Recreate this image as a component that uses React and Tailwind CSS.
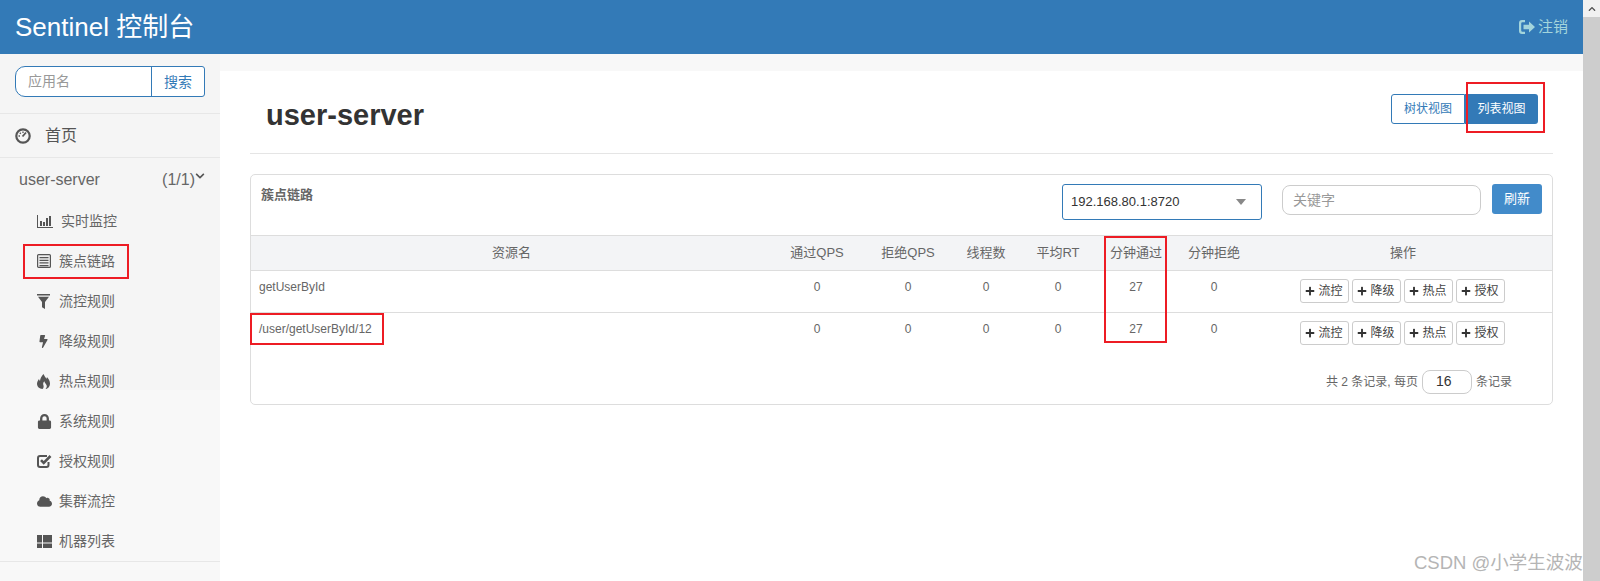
import React from "react";
import { FaBolt, FaLock, FaCloud, FaPlus, FaChevronDown, FaChevronUp } from "react-icons/fa";

const font = { fontFamily: '"Liberation Sans","Noto Sans CJK SC",sans-serif' };

const Dashboard = () => (
  <svg width="16" height="16" viewBox="0 0 16 16" fill="none" stroke="#555" className="shrink-0">
    <circle cx="8" cy="8" r="6.7" strokeWidth="2.2" />
    <path d="M7.500 8.500l3.500-4" strokeWidth="1.800" />
    <path d="M3.500 8h1.500M8 3.500v1.500M4.800 4.800l1 1" strokeWidth="1.300" />
  </svg>
);
const Stats = () => (
  <svg width="16" height="14" viewBox="0 0 16 14" fill="#555" className="shrink-0">
    <path d="M0 1h1v12h15v1H0z" />
    <path d="M3 7h2v5H3zM6 8h2v4H6zM9 4h2v8H9zM12 2h2v10h-2z" />
  </svg>
);
const ListAlt = () => (
  <svg width="14" height="14" viewBox="0 0 14 14" className="shrink-0">
    <rect x="0.600" y="0.600" width="12.800" height="12.800" rx="1" fill="#eee" stroke="#555" strokeWidth="1.200" />
    <path d="M2.500 3h9v1.300h-9zM2.500 5.700h9V7h-9zM2.500 8.300h9v1.300h-9zM2.500 11h9v1.200h-9z" fill="#555" />
  </svg>
);
const Funnel = () => (
  <svg width="13" height="15" viewBox="0 0 13 15" fill="#555" className="shrink-0">
    <path d="M0 0h13v1.600H0zM1 2.800h11L8 8v7l-3-1.800V8z" />
  </svg>
);
const Fire = () => (
  <svg width="13" height="15" viewBox="0 0 13 15" fill="#555" className="shrink-0">
    <path d="M6.500 0c1 2.500 2 3.200 3 4.800.3-.6.400-1.200.4-1.800 1.800 2 3.100 4 3.100 6.500C13 12.500 10.800 15 8.500 15c1-1 1.500-2.200 1.200-3.500-.4-1.500-2-2.300-2.400-4.300C6 8.500 6 10 6.500 11.500c.3 1.200.2 2.500-1 3.500C2.500 14.800 0 12.800 0 9.800 0 7.800 1 6.500 2 5c.1.800.4 1.500 1 2C3 4.500 4.800 2 6.500 0z" />
  </svg>
);
const CheckBox = () => (
  <svg width="15" height="14" viewBox="0 0 15 14" fill="none" stroke="#555" className="shrink-0">
    <path d="M11.500 8v3a2 2 0 0 1-2 2H3a2 2 0 0 1-2-2V4a2 2 0 0 1 2-2h7" strokeWidth="2" />
    <path d="M4 6.200l2.700 2.700L13.500 2" strokeWidth="2.600" />
  </svg>
);
const ThLarge = () => (
  <svg width="15" height="13" viewBox="0 0 15 13" fill="#555" className="shrink-0">
    <path d="M0 0h5v7.500H0zM6 0h9v7.500H6zM0 8.500h5V13H0zM6 8.500h9V13H6z" />
  </svg>
);
const LogOut = () => (
  <svg width="16" height="14" viewBox="0 0 16 14" fill="#a3d5dc" className="shrink-0">
    <path d="M6 0H3a3 3 0 0 0-3 3v8a3 3 0 0 0 3 3h3v-2.200H3.400A1.200 1.200 0 0 1 2.200 10.600V3.400A1.200 1.200 0 0 1 3.400 2.200H6z" />
    <path d="M10 1.500L16 7l-6 5.500V9.200H4.500V4.800H10z" />
  </svg>
);

const items = [
  { t: "实时监控", i: <Stats />, w: "w-[24px]" },
  { t: "簇点链路", i: <ListAlt />, w: "w-[22px]" },
  { t: "流控规则", i: <Funnel />, w: "w-[22px]" },
  { t: "降级规则", i: <FaBolt size={13} color="#555" />, w: "w-[22px]" },
  { t: "热点规则", i: <Fire />, w: "w-[22px]" },
];
const items2 = [
  { t: "系统规则", i: <FaLock size={15} color="#555" /> },
  { t: "授权规则", i: <CheckBox /> },
  { t: "集群流控", i: <FaCloud size={15} color="#555" /> },
  { t: "机器列表", i: <ThLarge /> },
];

function SideItem({ t, i, w = "w-[22px]" }) {
  return (
    <div className="flex h-10 items-center pl-[37px] text-[14px] text-[#666]">
      <span className={`${w} flex shrink-0 items-center`}>{i}</span>
      <span>{t}</span>
    </div>
  );
}

const rows = ["getUserById", "/user/getUserById/12"];
const heads = ["通过QPS", "拒绝QPS", "线程数", "平均RT", "分钟通过", "分钟拒绝"];
const ops = ["流控", "降级", "热点", "授权"];

function Row({ name, last }) {
  const vals = ["0", "0", "0", "0", "27", "0"];
  return (
    <tr className={last ? "h-[42px]" : "h-[42px] border-b border-[#ddd]"}>
      <td className="pl-[8px] pt-[6px] align-top leading-5">{name}</td>
      {vals.map((v, k) => (
        <td key={k} className="pt-[6px] text-center align-top leading-5">{v}</td>
      ))}
      <td className="pt-[8px] align-top">
        <div className="flex justify-center gap-[3px] pr-[2px]">
          {ops.map((o) => (
            <span key={o} className="flex h-6 w-[49px] items-center justify-center gap-[3px] rounded-[3px] border border-[#ccc] text-[12px] text-[#444]">
              <FaPlus size={10} color="#333" />
              {o}
            </span>
          ))}
        </div>
      </td>
    </tr>
  );
}

function RedBox({ className }) {
  return <div className={`pointer-events-none absolute border-[2px] border-[#ed1c24] ${className}`} />;
}

export default function App() {
  return (
    <div className="relative flex h-[581px] w-[1600px] overflow-hidden bg-white" style={font}>
      <div className="flex w-[1583px] flex-col">
        <header className="flex h-[54px] shrink-0 items-center justify-between bg-[#337ab7] pl-[15px] pr-[15px]">
          <span className="text-[26px] text-white">Sentinel 控制台</span>
          <span className="flex items-center gap-[3px] text-[15px] text-[#a3d5dc]">
            <LogOut />
            注销
          </span>
        </header>
        <div className="flex flex-1">
          <aside className="flex w-[220px] shrink-0 flex-col bg-[#f8f8f8]">
            <div className="h-[336px] bg-[#f5f5f5]">
              <div className="px-[15px] pb-4 pt-3">
                <div className="flex h-[31px] w-[190px] rounded-l-[10px] rounded-r-[3px] border border-[#337ab7] bg-white">
                  <span className="flex-1 pl-3 text-[14px] leading-[29px] text-[#999]">应用名</span>
                  <span className="flex w-[53px] items-center justify-center border-l border-[#337ab7] pt-[1px] text-[14px] text-[#337ab7]">搜索</span>
                </div>
              </div>
              <div className="flex h-[45px] items-center gap-[14px] border-y border-[#e7e7e7] pl-[15px] text-[16px] text-[#555]">
                <Dashboard />
                首页
              </div>
              <div className="flex h-[43px] items-center pl-[19px] pr-[15px] text-[16px] text-[#666]">
                <span className="flex-1">user-server</span>
                <span>(1/1)</span>
                <FaChevronDown size={10} color="#555" className="mb-[7px]" />
              </div>
              {items.map((x) => (
                <SideItem key={x.t} {...x} />
              ))}
            </div>
            <div className="flex-1 pt-[11px]">
              {items2.map((x) => (
                <SideItem key={x.t} {...x} />
              ))}
              <div className="border-t border-[#e7e7e7]" />
            </div>
          </aside>
          <main className="flex flex-1 flex-col bg-[#f8f8f8] pt-[17px]">
            <div className="flex-1 bg-white px-[30px]">
              <div className="flex h-[83px] items-start justify-between border-b border-[#e5e5e5] pl-[16px] pr-[15px]">
                <h1 className="mt-[25px] text-[29px] font-bold leading-[38px] text-[#333]">user-server</h1>
                <div className="mt-[23px] flex h-[30px] text-[12px]">
                  <span className="flex w-[74px] items-center justify-center rounded-l-[3px] border border-[#337ab7] text-[#337ab7]">树状视图</span>
                  <span className="flex w-[73px] items-center justify-center rounded-r-[3px] bg-[#337ab7] text-white">列表视图</span>
                </div>
              </div>
              <section className="mt-5 h-[231px] rounded-[5px] border border-[#ddd] text-[12px] text-[#666]">
                <div className="flex h-[60px] items-start pl-[10px] pr-[10px] pt-[9px]">
                  <span className="mt-[1px] flex-1 text-[13px] font-bold leading-5 text-[#666]">簇点链路</span>
                  <div className="flex h-9 w-[200px] items-center justify-between rounded-[3px] border border-[#337ab7] pl-2 pr-[15px] text-[13px] text-[#333]">
                    192.168.80.1:8720
                    <span className="h-0 w-0 border-x-[5px] border-t-[6px] border-x-transparent border-t-[#888]" />
                  </div>
                  <div className="ml-5 mt-[1px] flex h-[30px] w-[199px] items-center rounded-[8px] border border-[#ccc] pl-[10px] text-[14px] text-[#999]">关键字</div>
                  <span className="ml-[11px] flex h-[30px] w-[50px] items-center justify-center rounded-[3px] bg-[#428bca] text-[13px] text-white">刷新</span>
                </div>
                <table className="w-full table-fixed border-collapse">
                  <colgroup>
                    <col className="w-[521px]" />
                    <col className="w-[90px]" />
                    <col className="w-[92px]" />
                    <col className="w-[64px]" />
                    <col className="w-[80px]" />
                    <col className="w-[76px]" />
                    <col className="w-[80px]" />
                    <col className="w-[298px]" />
                  </colgroup>
                  <thead>
                    <tr className="h-[35px] border-y border-[#ddd] bg-[#f3f4f6] text-[13px]">
                      <th className="font-normal">资源名</th>
                      {heads.map((h) => (
                        <th key={h} className="font-normal">{h}</th>
                      ))}
                      <th className="font-normal">操作</th>
                    </tr>
                  </thead>
                  <tbody>
                    {rows.map((r, k) => (
                      <Row key={r} name={r} last={k === 1} />
                    ))}
                  </tbody>
                </table>
                <div className="flex items-center justify-end pr-10 pt-[15px]">
                  <span>共 2 条记录, 每页</span>
                  <span className="mx-1 flex h-6 w-[50px] items-center rounded-[8px] border border-[#ccc] pl-[13px] text-[14px] text-[#333]">16</span>
                  <span>条记录</span>
                </div>
              </section>
            </div>
          </main>
        </div>
      </div>
      <div className="flex w-[17px] flex-col bg-[#cdcdcd]">
        <div className="flex h-[17px] items-center justify-center bg-[#f1f1f1]">
          <FaChevronUp size={8} color="#505050" />
        </div>
      </div>
      <RedBox className="left-[23px] top-[244px] h-[35px] w-[106px]" />
      <RedBox className="left-[250px] top-[313px] h-[32px] w-[134px]" />
      <RedBox className="left-[1104px] top-[236px] h-[107px] w-[63px]" />
      <RedBox className="left-[1466px] top-[82px] h-[51px] w-[79px]" />
      <span className="absolute left-[1414px] top-[552px] whitespace-nowrap text-[18.5px] leading-[22px] text-[#b5b5b5]">CSDN @小学生波波</span>
    </div>
  );
}
